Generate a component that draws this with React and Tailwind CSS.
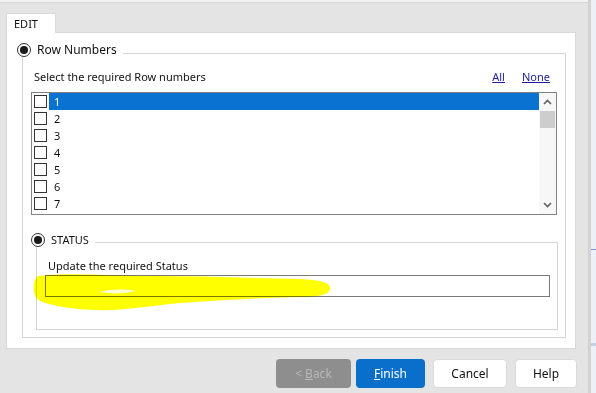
import React from "react"

const font = { fontFamily: '"Noto Sans", "Segoe UI", Arial, sans-serif' }

const Radio = () => (
  <div className="w-[14px] h-[14px] rounded-full border border-[#333] bg-white flex items-center justify-center">
    <div className="w-[8px] h-[8px] rounded-full bg-[#1a1a1a]" />
  </div>
)

const Chevron = ({ up }) => (
  <svg width="9" height="6" viewBox="0 0 9 6">
    <path
      d={up ? "M1 5 L4.5 1.5 L8 5" : "M1 1 L4.5 4.5 L8 1"}
      fill="none"
      stroke="#606060"
      strokeWidth="1.6"
    />
  </svg>
)

const rows = ["1", "2", "3", "4", "5", "6", "7"]

export default function App() {
  return (
    <div
      className="relative w-[596px] h-[393px] bg-[#e4e4e4] flex overflow-hidden text-[11px] text-[#111]"
      style={font}
    >
      <div className="flex-1 flex flex-col">
        {/* top edge */}
        <div className="h-[3px] bg-[#f2f2f2] border-b border-[#d6d6d6]" />

        {/* tab */}
        <div className="pl-[6px] pt-[9px]">
          <div className="w-[50px] h-[20px] bg-white border border-b-0 border-[#d9d9d9] pl-[7px] leading-[19px] relative top-[1px]">
            EDIT
          </div>
        </div>

        {/* panel */}
        <div className="ml-[6px] w-[570px] h-[317px] bg-white border border-[#d9d9d9] pt-[20px] pl-[15px]">
          {/* Row Numbers group */}
          <div className="relative w-[544px] h-[285px] border border-[#d5d5d5] pt-[14px] px-[8px]">
            <div className="absolute left-[-6px] top-[-11px] flex items-center gap-[6px] bg-white pr-[6px]">
              <Radio />
              <span className="leading-[14px] text-[12px]">Row Numbers</span>
            </div>

            <div className="flex items-center justify-between h-[18px] pl-[3px] pr-[7px]">
              <span>Select the required Row numbers</span>
              <div className="flex gap-[17px] text-[#1c1c9c] underline">
                <span>All</span>
                <span>None</span>
              </div>
            </div>

            {/* list box */}
            <div className="mt-[6px] h-[123px] border border-[#828282] flex">
              <div className="flex-1 flex flex-col">
                {rows.map((r, i) => (
                  <div key={r} className="h-[17px] flex items-center">
                    <div className="w-[13px] h-[13px] border border-[#333] bg-white ml-[2px] mr-[2px] shrink-0" />
                    <div
                      className={
                        i === 0
                          ? "flex-1 h-full bg-[#0a72d0] text-white pl-[5px] leading-[17px]"
                          : "flex-1 h-full pl-[5px] leading-[17px]"
                      }
                    >
                      {r}
                    </div>
                  </div>
                ))}
              </div>
              <div className="w-[17px] flex flex-col items-center bg-[#f7f7f7]">
                <div className="h-[18px] flex items-center justify-center">
                  <Chevron up />
                </div>
                <div className="w-[15px] h-[17px] bg-[#cdcdcd]" />
                <div className="flex-1" />
                <div className="h-[18px] flex items-center justify-center">
                  <Chevron />
                </div>
              </div>
            </div>

            {/* STATUS group */}
            <div className="relative mt-[27px] ml-[5px] w-[522px] h-[88px] border border-[#d5d5d5] pt-[15px] pl-[8px] pr-[7px]">
              <div className="absolute left-[-6px] top-[-10px] flex items-center gap-[6px] bg-white pr-[6px]">
                <Radio />
                <span className="leading-[14px]">STATUS</span>
              </div>
              <div className="pl-[3px] leading-[16px]">Update the required Status</div>
              <div className="mt-[1px] h-[22px] border border-[#7a7a7a] bg-white" />
            </div>
          </div>
        </div>

        {/* buttons */}
        <div className="flex justify-end items-center pr-[11px] pt-[10px] text-[12px]">
          <div className="w-[75px] h-[29px] rounded-[4px] bg-[#8e8e8e] text-[#b8b8b8] flex items-center justify-center">
            &lt; <span className="underline ml-[3px]">B</span>ack
          </div>
          <div className="ml-[5px] w-[69px] h-[29px] rounded-[4px] bg-[#0a6fcb] text-white flex items-center justify-center">
            <span className="underline">F</span>inish
          </div>
          <div className="ml-[8px] w-[74px] h-[29px] rounded-[4px] bg-white border border-[#dadada] flex items-center justify-center">
            Cancel
          </div>
          <div className="ml-[8px] w-[62px] h-[29px] rounded-[4px] bg-white border border-[#dadada] flex items-center justify-center">
            Help
          </div>
        </div>
      </div>

      {/* right window edge */}
      <div className="w-[3px] bg-[#d2d2d2]" />
      <div className="w-[5px] bg-[#eef0f8] flex flex-col">
        <div className="h-[249px]" />
        <div className="h-[1px] bg-[#8090c8]" />
        <div className="h-[93px]" />
        <div className="h-[3px] bg-[#c8d0e4]" />
      </div>

      {/* yellow redaction scribble */}
      <svg
        className="absolute left-[30px] top-[265px] mix-blend-multiply"
        width="310"
        height="50"
        viewBox="30 265 310 50"
      >
        <path
          d="M38 276 C70 272 110 276 150 276 C200 276 250 278 300 279 C322 280 331 283 330 289 C329 295 318 297 300 297 C260 298 220 300 180 303 C150 306 120 311 95 310 C70 309 45 305 37 299 C32 292 33 280 38 276 Z"
          fill="#ffff00"
        />
        <path
          d="M100 292 C110 289 125 289 136 291 C125 294 110 294 100 292 Z"
          fill="#ffffd8"
        />
      </svg>
    </div>
  )
}
